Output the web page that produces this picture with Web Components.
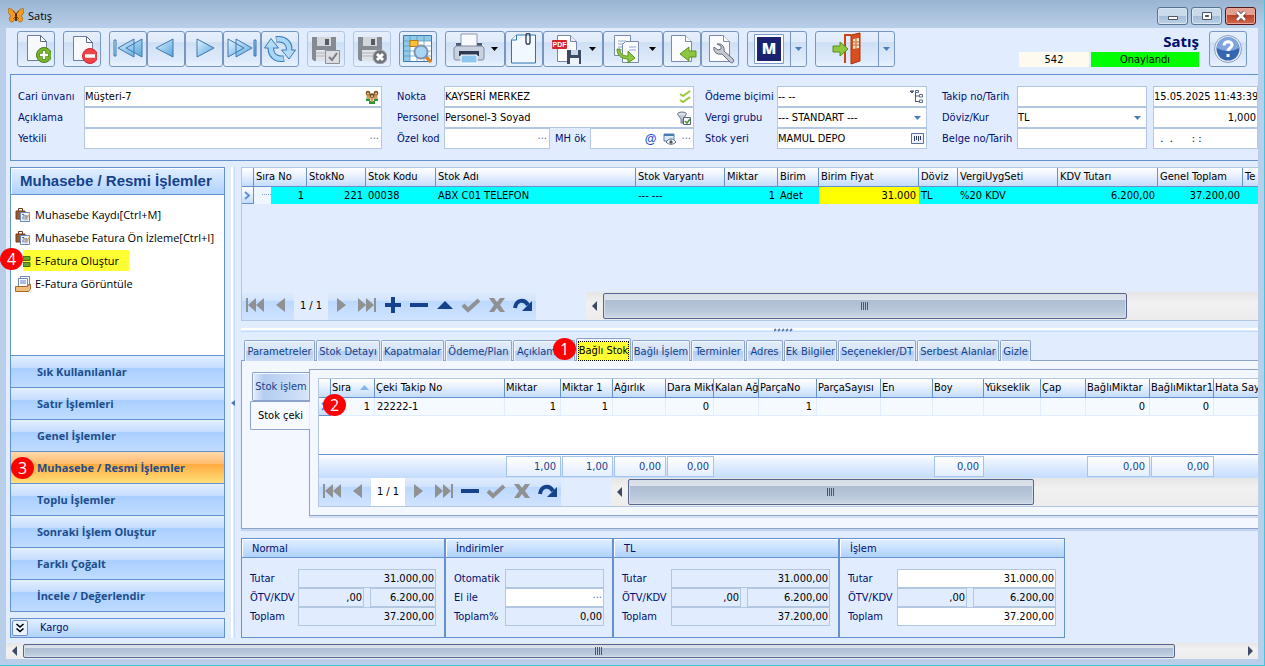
<!DOCTYPE html>
<html lang="tr">
<head>
<meta charset="utf-8">
<title>Satış</title>
<style>
html,body{margin:0;height:100%}
body{font:11px/14px "DejaVu Sans Condensed","Liberation Sans",sans-serif;color:#000;overflow:hidden}
.work{display:flex;flex:1;min-height:0;padding:6px 0 5px 4px}
.main{flex:1;min-width:0;display:flex;flex-direction:column;margin-left:6px}
</style>
</head>
<body>
<app-window caption="Satış">
  <sales-toolbar></sales-toolbar>
  <sales-header></sales-header>
  <div class="work">
    <side-nav></side-nav>
    <pane-splitter></pane-splitter>
    <div class="main">
      <data-grid source="lines"></data-grid>
      <pane-splitter flat></pane-splitter>
      <detail-tabs><data-grid source="packing"></data-grid></detail-tabs>
      <totals-panel></totals-panel>
    </div>
  </div>
  <scroll-bar end style="--thumb:1152;--rest:66;--h:16px"></scroll-bar>
</app-window>

<script>
const ICONS = {
butterfly:[16,16,`<path d="M8 6C6 1 1 0 0 1c0 3 1 6 3 7-2 1-2 3-1 5 2 2 4 1 6-4zM8 6c2-5 7-6 8-5 0 3-1 6-3 7 2 1 2 3 1 5-2 2-4 1-6-4z" fill="#f19a1f" stroke="#a8610f" stroke-width=".7"/><path d="M8 5v8" stroke="#2b1605" stroke-width="1.6"/><path d="M8 6L5 3M8 6l3-3M8 8l-3 3M8 8l3 3" stroke="#7a400a" stroke-width=".8"/>`],
add:[30,30,`<path d="M6.500 1.500h13l6 6v19h-19z" fill="#f7f9fd" stroke="#6f7fa3"/><path d="M19.500 1.500v6h6z" fill="#fff" stroke="#5b6b90"/><circle cx="23" cy="21" r="7.500" fill="#76b82a" stroke="#4a7f14"/><path d="M23 16.500v9M18.500 21h9" stroke="#4a7f14" stroke-width="4"/><path d="M23 17v8M19 21h8" stroke="#fff" stroke-width="2.500"/>`],
remove:[30,30,`<path d="M6.500 2.500h13l6 6v18h-19z" fill="#f7f9fd" stroke="#6f7fa3"/><path d="M19.500 2.500v6h6z" fill="#fff" stroke="#5b6b90"/><circle cx="23" cy="22" r="7.500" fill="#f0444b" stroke="#c8242b"/><path d="M18 22h10" stroke="#fff" stroke-width="3.500"/>`],
first:[32,24,`<g fill="url(#b)" stroke="#3f78b0"><path d="M2 3h2v16H2zM22 2v18L6 11zM30 2v18L14 11z"/></g>`],
prev:[32,24,`<path d="M23 2v18L6 11z" fill="url(#b)" stroke="#3f78b0"/>`],
next:[32,24,`<path d="M9 2v18l17-9z" fill="url(#b)" stroke="#3f78b0"/>`],
last:[32,24,`<g fill="url(#b)" stroke="#3f78b0"><path d="M28 3h2v16h-2zM2 2v18l16-9zM10 2v18l16-9z"/></g>`],
refresh:[32,28,`<path d="M12 4.500C20 3 26 8 25 15M20 23.500C12 25 6 20 7 12" stroke="#3a79b5" stroke-width="6.500"/><path d="M17.500 15h14L25 24zM.5 13h14L7 3.500z" fill="#b5dcf6" stroke="#3a79b5"/><path d="M12.500 4.500C20 3 26 8 25 16M19.500 23.500C12 25 6 20 7 11" stroke="#a9d6f4" stroke-width="4.500"/>`],
saveok:[30,30,`<path d="M1 3h24v24H3l-2-2z" fill="#858b93"/><path d="M6 3h14v9H6z" fill="#d3d7dc"/><path d="M14 5h4v6h-4z" fill="#565b63"/><path d="M5 16h16v11H5z" fill="#dfe2e6"/><path d="M5 19h16M5 22h16" stroke="#b1b6bd"/><path d="M14.500 16.500h14v13h-14z" fill="#dcdee1" stroke="#8b9199"/><path d="M18 23l3 3 5-7" fill="none" stroke="#777d86" stroke-width="2"/>`],
saveno:[30,30,`<path d="M1 3h24v24H3l-2-2z" fill="#858b93"/><path d="M6 3h14v9H6z" fill="#d3d7dc"/><path d="M14 5h4v6h-4z" fill="#565b63"/><path d="M5 16h16v11H5z" fill="#dfe2e6"/><path d="M5 19h16M5 22h16" stroke="#b1b6bd"/><circle cx="23" cy="23" r="7" fill="#6f747b" stroke="#9da2a8"/><path d="M20 20l6 6M26 20l-6 6" stroke="#fff" stroke-width="3"/>`],
gridfind:[32,30,`<path d="M1.500 1.500h28v26h-28z" fill="#fff" stroke="#3d78ad"/><path d="M2 2h27v5H2zM2 7h6v20H2z" fill="#8fcbe8"/><path d="M8 1v26M15 1v26M22 1v26M2 7h27M2 12h27M2 17h27M2 22h27" stroke="#4b93bf" opacity=".7"/><path d="M8 6.500h8v6H8z" fill="#fbbf38" stroke="#c07a10"/><path d="M23 22l6 6" stroke="#d9822c" stroke-width="3.500"/><circle cx="19" cy="18" r="6.500" fill="#a9d6f5" stroke="#8193b5" stroke-width="2"/>`],
printer:[32,32,`<path d="M8 1h16v13H8z" fill="#f7f9fd" stroke="#8a96ad"/><path d="M3 10h5v4h16v-4h5v6H3z" fill="#4e5b73"/><path d="M1 15l2-2h26l2 2v10c0 2-1 2-3 2H4c-2 0-3 0-3-2z" fill="#c9d0df" stroke="#7f8ba3"/><path d="M6 18h20v5H6z" fill="#2f3a50"/><path d="M8 22h16v8H8z" fill="#8cc7ee" stroke="#fff"/>`],
clip:[28,32,`<path d="M1.500 7l5-5H25.500v28h-24z" fill="#f2f8ff" stroke="#2e74b5"/><path d="M1.500 7h5V2" fill="#fff" stroke="#2e74b5"/><path d="M16 3v6c0 3 4 3 4 0V3c0-4-4-4-4 0" fill="none" stroke="#3b4554" stroke-width="1.400"/>`],
pdf:[32,32,`<path d="M6.500 2.500h13l6 6v20h-19z" fill="#fff" stroke="#7888aa"/><path d="M19.500 2.500v6h6" fill="#eef" stroke="#7888aa"/><rect x="1" y="7" width="15" height="9" rx="1" fill="#d6232c"/><text x="8.500" y="14" font-size="7" text-anchor="middle" font-family="Liberation Sans,sans-serif" font-weight="700" fill="#fff">PDF</text><path d="M16 17h14v14H16z" fill="#3d4a63"/><path d="M20 17h7v5h-7z" fill="#c9d6ea"/><path d="M19 25h9v6h-9z" fill="#eef3fb"/>`],
copy:[32,32,`<path d="M3.500 2.500h16v20h-16z" fill="#f9fbff" stroke="#7a8bb0"/><path d="M7 8h8M7 11h8M7 14h8M7 17h5" stroke="#8ba6d3"/><path d="M11.500 11.500l3-3h13v21h-16z" fill="#f9fbff" stroke="#7a8bb0"/><path d="M18 14h7M18 17h7" stroke="#8ba6d3"/><path d="M9 16c0 6 4 7 8 7v-5l7 7-7 5v-4C10 26 6 22 6 16z" fill="#8dc63f" stroke="#5b9420"/>`],
import:[32,32,`<path d="M5.500 2.500h14l6 6v20h-20z" fill="#fafcff" stroke="#7a8bb0"/><path d="M19.500 2.500v6h6" fill="#fff" stroke="#7a8bb0"/><path d="M14 21l9-7v4h7v6h-7v4z" fill="#8dc63f" stroke="#5b9420"/>`],
wrench:[32,32,`<path d="M5.500 2.500h14l6 6v20h-20z" fill="#fafcff" stroke="#7a8bb0"/><path d="M19.500 2.500v6h6" fill="#fff" stroke="#7a8bb0"/><path d="M13 11c5-1 8 3 7 7l9 8c2 3-1 5-3 3l-8-8c-5 1-9-2-8-7l4 3 3-1 0-3z" fill="#c4c9d1" stroke="#646c7a"/>`],
mlogo:[30,30,`<path d="M.5.500h29v29H.500z" fill="#fff" stroke="#7b9bd0"/><path d="M3 3h24v24H3z" fill="#1b2370"/><text x="15" y="20" font-size="15" text-anchor="middle" font-family="Open Sans,sans-serif" font-weight="800" fill="#fff">M</text>`],
exit:[32,34,`<path d="M14 31V3h6" fill="none" stroke="#c9441b" stroke-width="2"/><path d="M20 3l9-2v28l-9 3z" fill="#d94e1f" stroke="#a93210"/><path d="M22 7l6-1v10l-6 1z" fill="#f2e7c4"/><path d="M25 6v11M22 10h6M22 13h6" stroke="#c9692f"/><path d="M2 14h7v-4l8 7-8 7v-4H2z" fill="#8fc740" stroke="#568d1c"/>`],
help:[32,32,`<circle cx="16" cy="16" r="13.500" fill="#e8edf6" stroke="#8c9fc2"/><circle cx="16" cy="16" r="11.500" fill="#3566b0"/><path d="M5 15a11 11 0 0 1 22 0c-7 4-15 4-22 0z" fill="#7fa5dc"/><path d="M12 12.500c0-5 8-5 8-.5 0 3-4 3-4 6" fill="none" stroke="#fff" stroke-width="3"/><path d="M14.500 21h3v3h-3z" fill="#fff"/>`],
people:[14,14,`<path d="M1 8.500h4v2.500H1zM9 8.500h4v2.500H9zM4 11h6v3H4z" fill="#2c9638"/><path d="M1 4h4v5H2zM9 4h4l-1 5H9zM5 7h4l-1 5H6z" fill="#d09a63"/><circle cx="3" cy="3" r="2.300" fill="#7d5423"/><circle cx="11" cy="3" r="2.300" fill="#7d5423"/><circle cx="7" cy="5.500" r="2.300" fill="#6d4519"/><circle cx="3" cy="3.600" r="1.100" fill="#e8bd8c"/><circle cx="11" cy="3.600" r="1.100" fill="#e8bd8c"/><circle cx="7" cy="6.200" r="1.100" fill="#e8bd8c"/>`],
checks:[12,14,`<path d="M1 4l3 2 7-5M1 10l3 2 7-5" fill="none" stroke="#97c83c" stroke-width="2"/>`],
filter:[14,14,`<ellipse cx="5" cy="3" rx="4.500" ry="2" fill="#dde2ea" stroke="#6a7486"/><path d="M1 4l3 4v4h2V8l3-4" fill="#c6ccd6" stroke="#6a7486"/><path d="M6.500 6.500h7v7h-7z" fill="#fff" stroke="#55627c"/><path d="M8 10l2 2 3-4" fill="none" stroke="#48962b" stroke-width="1.600"/>`],
eyewin:[13,12,`<path d="M1 1h10v7H1z" fill="#dcebfa" stroke="#5784b8"/><path d="M1 2h10" stroke="#4a7ab3" stroke-width="2"/><path d="M3 9c3-4 7-4 10 0-3 3-7 3-10 0z" fill="#fff" stroke="#5a6477"/><circle cx="8" cy="9" r="1.700" fill="#4c5669"/>`],
tree:[14,14,`<path d="M0 1h4L2 3zM5.500 1v11M6 6h3M6 11.500h3" stroke="#4b5a78" fill="#4b5a78"/><path d="M5.500.500h3v2h-3zM9.500 4.500h3v2.500h-3zM9.500 10h3v2.500h-3z" fill="#fff" stroke="#5b6a88"/>`],
barcode:[13,11,`<path d="M.5.500h12v10H.500z" fill="#eef2fb" stroke="#5a70a0"/><path d="M3.500 3v5M5.500 3v4M7.500 3v5M9.500 3v4" stroke="#2d3c5e"/>`],
drop:[7,4,`<path d="M0 0h7L3.500 4z" fill="currentColor"/>`],
bag:[16,16,`<path d="M1 4h9v8H1z" fill="#9a5a30" stroke="#6b3a1c"/><path d="M3.500 4V1.500h4V4" fill="none" stroke="#6b3a1c"/><path d="M5.500 5.500h9v9h-9z" fill="#f5f8ff" stroke="#6b84b3"/><path d="M7 7.500h2v2M8 9.500v3M11 8v4" stroke="#3f62a8"/><path d="M10 12l5-5" stroke="#d9a04e" stroke-width="1.500"/><circle cx="11" cy="11" r="2" fill="none" stroke="#8fa3c9" stroke-width=".8"/>`],
stack:[8,12,`<path d="M0 1.500h7v4H0zM0 7.500h7v4H0z" fill="#6aa32a" stroke="#3f7a12"/>`],
tray:[16,16,`<path d="M5.500.500h9v8h-9z" fill="#fff" stroke="#6f86b8"/><path d="M3.500 2.500h9v8h-9z" fill="#fff" stroke="#6f86b8"/><path d="M5 5h6M5 7h6" stroke="#5f7ab4"/><path d="M.5 10.500h12l3-2.500v5l-2 2.500H.500z" fill="#f0bd7c" stroke="#a9692c"/>`],
chev2:[10,10,`<path d="M1.500 1l3.500 3L8.500 1M1.500 5.500l3.500 3 3.500-3" fill="none" stroke="#000" stroke-width="1.600"/>`],
rfirst:[20,16,`<path d="M1 1h2v14H1zM11 1v14L3 8zM19 1v14l-8-7z" fill="#8f9193"/>`],
rprev:[20,16,`<path d="M14 1v14L5 8z" fill="#8f9193"/>`],
rnext:[20,16,`<path d="M6 1v14l9-7z" fill="#8f9193"/>`],
rlast:[20,16,`<path d="M17 1h2v14h-2zM1 1v14l8-7zM9 1v14l8-7z" fill="#8f9193"/>`],
rplus:[20,16,`<path d="M8 0h4v6h6v4h-6v6H8v-6H2V6h6z" fill="#15428b"/>`],
rminus:[20,16,`<path d="M1 6h18v4H1z" fill="#15428b"/>`],
rup:[20,16,`<path d="M2 12L10 4l8 8z" fill="#15428b"/>`],
rcheck:[20,16,`<path d="M2 8l5 5L18 3" fill="none" stroke="#8f9193" stroke-width="4"/>`],
rcross:[20,16,`<path d="M2 1h5l3 4 3-4h5l-5 7 5 7h-5l-3-4-3 4H2l5-7z" fill="#8f9193"/>`],
rredo:[20,16,`<path d="M2 11C3 3 11 1 15 8" fill="none" stroke="#15428b" stroke-width="4"/><path d="M19 4v10H9z" fill="#15428b"/>`],
};
let uid = 0;
class Base extends HTMLElement {
  connectedCallback() {
    if (this.shadowRoot) return;
    this.attachShadow({mode: 'open'}).innerHTML = `<style>:host,*{box-sizing:border-box}${this.css()}</style>${this.html()}`;
  }
  at(n, d = '') { return this.getAttribute(n) ?? d; }
}
const def = (n, c) => customElements.define(n, c);
const icon = n => `<ui-icon name="${n}"></ui-icon>`;

def('ui-icon', class extends Base {
  css() { return `:host{display:inline-flex;flex:none}svg{display:block}`; }
  html() {
    const [w, h, body] = ICONS[this.at('name')];
    return `<svg width="${w}" height="${h}" viewBox="0 0 ${w} ${h}" fill="none" aria-hidden="true"><defs><linearGradient id="b" x1="0" y1="0" x2="1" y2="1"><stop offset="0" stop-color="#e4f4fd"/><stop offset=".6" stop-color="#8cc4ec"/><stop offset="1" stop-color="#5aa2da"/></linearGradient></defs>${body}</svg>`;
  }
});

def('step-badge', class extends Base {
  css() { return `:host{position:absolute;z-index:3;display:flex;align-items:center;justify-content:center;width:23px;height:22px;border-radius:50%;background:#fe0000;color:#fff;font:16px/22px "Open Sans",sans-serif}`; }
  html() { return `<slot></slot>`; }
});

def('app-window', class extends Base {
  css() { return `
    :host{display:flex;flex-direction:column;min-height:100vh;background:#b9cfe9;border-right:1px solid #42c4de;border-bottom:1px solid #42c4de;padding:0 6px 6px}
    header{display:flex;align-items:center;height:28px;margin:0 -6px;padding:4px 8px 0 8px;background:linear-gradient(#99b4d1,#b9cfe9);font:11px/16px "Open Sans",sans-serif}
    h1{flex:1;margin:0 0 0 4px;font:inherit}
    .wb{display:flex;gap:3px}
    button{width:31px;height:18px;padding:0;border:1px solid #5b7391;border-radius:3px;background:linear-gradient(#c9daec 50%,#a3bcd7 50%,#bcd2e8);display:flex;align-items:center;justify-content:center;box-shadow:inset 0 0 0 1px #d8e5f2}
    .close{border-color:#551a17;background:linear-gradient(#e39f91 45%,#bd3f29 45%,#d2684c);box-shadow:inset 0 0 0 1px #e9a798}
    main{flex:1;display:flex;flex-direction:column;min-width:0;background:#e1edff}`; }
  html() { return `
    <header>${icon('butterfly')}<h1>${this.at('caption')}</h1><div class="wb">
      <button aria-label="Simge durumuna küçült"><svg width="14" height="10"><path d="M2.500 5.500h9v3h-9z" fill="#fff" stroke="#4c5561"/></svg></button>
      <button aria-label="Ekranı kapla"><svg width="14" height="10"><path d="M2.500 1.500h9v7h-9z" fill="#fff" stroke="#4c5561"/><path d="M5.500 4.500h3v1h-3z" stroke="#4c5561"/></svg></button>
      <button class="close" aria-label="Kapat"><svg width="14" height="10"><path d="M3 1l8 8M11 1L3 9" stroke="#4c3a3a" stroke-width="4"/><path d="M3 1l8 8M11 1L3 9" stroke="#fff" stroke-width="2.500"/></svg></button>
    </div></header><main><slot></slot></main>`; }
});

def('sales-toolbar', class extends Base {
  css() { return `
    :host{display:flex;height:46px;padding:3px 11px 0;align-items:flex-start}
    button{height:36px;width:38px;padding:0;border:1px solid #7896c4;border-radius:3px;background:linear-gradient(#e6effb,#dfeafa 30%,#cfdff4 31%,#dfebfb 85%,#e9f3ff);display:flex;align-items:center;justify-content:center;color:#000}
    button[disabled]{border-color:#b3c6e2}
    .g{display:flex;margin-right:8px}
    .wide{width:60px;gap:6px}
    .m{width:44px;border-radius:3px 0 0 3px}.e{width:64px;border-radius:3px 0 0 3px}
    .dd{width:17px;margin-left:-1px;border-radius:0 3px 3px 0;color:#4a7ebb}
    .status{margin-left:auto;display:grid;grid-template-columns:70px 108px;column-gap:2px;text-align:center;margin-right:10px}
    h2{grid-column:1/3;margin:0;text-align:right;font:700 15px/21px "Noto Sans","Open Sans",sans-serif;color:#000f6e}
    output{height:15px;line-height:16px;background:#fffaf0}
    .ok{background:#0f0}`; }
  html() {
    const b = (n, l, c = '', x = '') => `<button class="${c}" aria-label="${l}" ${x}>${icon(n)}${c === 'wide' ? icon('drop') : ''}</button>`;
    const dd = l => `<button class="dd" aria-label="${l}">${icon('drop')}</button>`;
    return `<div class="g">${b('add','Yeni')}</div><div class="g">${b('remove','Sil')}</div>
    <div class="g">${b('first','İlk')}${b('prev','Önceki')}${b('next','Sonraki')}${b('last','Son')}${b('refresh','Yenile')}</div>
    <div class="g">${b('saveok','Kaydet','','disabled')}</div><div class="g">${b('saveno','Vazgeç','','disabled')}</div>
    <div class="g">${b('gridfind','Listele')}</div>
    <div class="g">${b('printer','Yazdır','wide')}${b('clip','Ekler')}${b('pdf','PDF kaydet','wide')}${b('copy','Kopyala','wide')}${b('import','İçe al')}${b('wrench','Ayarlar')}</div>
    <div class="g">${b('mlogo','Mikro','m')}${dd('Seçenekler')}</div>
    <div class="g">${b('exit','Çıkış','e')}${dd('Çıkış seçenekleri')}</div>
    <div class="status"><h2>Satış</h2><output>542</output><output class="ok">Onaylandı</output></div>
    ${b('help','Yardım')}`;
  }
});

def('form-field', class extends Base {
  css() { return `
    :host{display:flex;min-width:0;height:var(--row,21px);align-items:stretch;color:#000f6e}
    label{flex:none;width:var(--label,0px);line-height:var(--row,21px);white-space:nowrap}
    .box{flex:1;min-width:0;display:flex;align-items:center;gap:6px;border:1px solid #b3c7e2;background:#fff;padding-right:var(--pad,2px)}
    :host([readonly]) .box{background:#e1edff}
    input,select{flex:1;width:0;min-width:0;height:100%;border:0;padding:0;margin:0;background:none;font:inherit;color:#000;appearance:none;outline:0;border-radius:0}
    :host([num]) input{text-align:right}
    :host([num]) .box{padding-right:1px}
    i{font-style:normal;color:#4a6ea8;line-height:8px;margin-top:-6px}
    b{color:#1e50d8;font:700 12px/14px "Liberation Sans",sans-serif}
    ui-icon{color:#4a7ebb}
    ui-icon[name=drop]{margin-right:3px}`; }
  html() {
    const id = 'f' + uid++, l = this.at('label'), v = this.at('value');
    const name = l ? `id="${id}"` : `id="${id}" aria-label="${this.at('name')}"`;
    const ad = this.at('icons').split(' ').filter(Boolean).map(n => n === 'dots' ? '<i>...</i>' : n === 'at' ? '<b>@</b>' : icon(n)).join('');
    const ctl = this.hasAttribute('select') ? `<select ${name}><option>${v}</option></select>` : `<input ${name} value="${v}" ${this.hasAttribute('readonly') ? 'readonly' : ''}>`;
    return `${l ? `<label for="${id}">${l}</label>` : ''}<div class="box">${ctl}${ad}</div>`;
  }
});

def('sales-header', class extends Base {
  css() { return `
    :host{display:grid;grid-template-columns:364fr 297fr 218fr 205fr 96fr;column-gap:15px;margin-left:4px;height:87px;padding:11px 0 0 7px;border:solid #6592cf;border-width:1px 0 1px 1px}
    div{display:flex;flex-direction:column;min-width:0}
    .a{--label:66px}.b{--label:47px}.c{--label:72px;margin-left:-4px}.d{--label:75px}.e{margin-left:-9px;--pad:0px}
    .two{flex-direction:row;gap:5px}.two form-field:first-child{flex:153}.two form-field:last-child{flex:139;--label:35px}`; }
  html() { return `
    <div class="a"><form-field label="Cari ünvanı" value="Müşteri-7" icons="people"></form-field><form-field label="Açıklama"></form-field><form-field label="Yetkili" icons="dots"></form-field></div>
    <div class="b"><form-field label="Nokta" value="KAYSERİ MERKEZ" icons="checks"></form-field><form-field label="Personel" value="Personel-3 Soyad" icons="filter"></form-field>
      <div class="two"><form-field label="Özel kod" icons="dots"></form-field><form-field label="MH ök" icons="at eyewin dots"></form-field></div></div>
    <div class="c"><form-field label="Ödeme biçimi" value="-- --" icons="tree"></form-field><form-field label="Vergi grubu" value="--- STANDART ---" select icons="drop"></form-field><form-field label="Stok yeri" value="MAMUL DEPO" icons="barcode"></form-field></div>
    <div class="d"><form-field label="Takip no/Tarih"></form-field><form-field label="Döviz/Kur" value="TL" select icons="drop"></form-field><form-field label="Belge no/Tarih"></form-field></div>
    <div class="e"><form-field name="Takip tarihi" value="15.05.2025 11:43:39"></form-field><form-field name="Kur" num value="1,000"></form-field><form-field name="Belge tarihi" value="  .  .      : :"></form-field></div>`; }
});

def('side-nav', class extends Base {
  css() { return `
    :host{display:flex;flex-direction:column;width:215px;flex:none}
    .box{flex:1;display:flex;flex-direction:column;border:1px solid #6592cf;background:#fff}
    h2{margin:0;height:27px;padding-left:9px;border-bottom:1px solid #6592cf;background:linear-gradient(#e3efff,#afd2ff);box-shadow:inset 1px 1px #fff;font:700 15px/26px "Liberation Sans",sans-serif;color:#15428b;white-space:nowrap}
    ul{list-style:none;margin:0;padding:8px 0 0 4px;flex:1}
    li{position:relative;height:23px;display:flex;align-items:center}
    a{display:flex;align-items:center;gap:4px;color:#000;text-decoration:none;font:11px/16px "Open Sans",sans-serif;white-space:nowrap}
    li.hot a{background:#ffff33;height:21px;margin-left:8px;padding-right:10px}
    li step-badge{left:-15px;top:-1px}
    .acc{position:relative;display:block;width:100%;height:32px;border:0;border-top:1px solid #6592cf;padding:0 0 0 26px;text-align:left;background:linear-gradient(#e3efff,#c5deff 38%,#a9cfff 40%,#c0dcff);font:700 11px/30px "Open Sans",sans-serif;color:#204d89}
    .on{background:linear-gradient(#ffd9aa,#ffbb6e 38%,#ffab3f 40%,#fee07b)}
    .acc step-badge{left:0;top:5px}
    .cargo{display:flex;align-items:center;gap:12px;height:20px;margin-top:6px;padding:0 1px;border:1px solid #6592cf;background:linear-gradient(#e3efff,#afd2ff);color:#000f6e}
    .cargo button{width:16px;height:16px;padding:0;border:1px solid #7590b8;border-radius:2px;background:#e9f2ff;display:flex;align-items:center;justify-content:center}`; }
  html() {
    const it = (i, t) => `<li><a href="#">${icon(i)}${t}</a></li>`;
    return `<div class="box"><h2>Muhasebe / Resmi İşlemler</h2><ul>${it('bag','Muhasebe Kaydı[Ctrl+M]')}${it('bag','Muhasebe Fatura Ön İzleme[Ctrl+I]')}
    <li class="hot"><step-badge>4</step-badge><a href="#">${icon('stack')}E-Fatura Oluştur</a></li>${it('tray','E-Fatura Görüntüle')}</ul>
    ${['Sık Kullanılanlar','Satır İşlemleri','Genel İşlemler','Muhasebe / Resmi İşlemler','Toplu İşlemler','Sonraki İşlem Oluştur','Farklı Çoğalt','İncele / Değerlendir'].map((t, i) => `<button class="acc ${i === 3 ? 'on' : ''}">${i === 3 ? '<step-badge>3</step-badge>' : ''}${t}</button>`).join('')}</div>
    <div class="cargo"><button aria-label="Genişlet">${icon('chev2')}</button>Kargo</div>`;
  }
});

def('pane-splitter', class extends Base {
  css() { return `
    :host{display:flex;flex:none;align-items:center;justify-content:center;width:4px;margin-left:6px;background:linear-gradient(90deg,#fff 2px,#e1edff 2px,#e1edff 3px,#c3dcff 3px)}
    :host([flat]){width:auto;height:4px;margin:7px 0 6px;padding-left:68px;background:linear-gradient(#fff 2px,#e1edff 2px,#e1edff 3px,#c3dcff 3px)}
    svg{flex:none}`; }
  html() { return this.hasAttribute('flat')
    ? `<svg width="19" height="4"><path d="M0 3l2-2M4 3l2-2M8 3l2-2M12 3l2-2M16 3l2-2" stroke="#5d7fb5" stroke-width="2"/></svg>`
    : `<svg width="4" height="6"><path d="M4 0v6L0 3z" fill="#4a78b8"/></svg>`; }
});

def('scroll-bar', class extends Base {
  css() { return `
    :host{display:flex;flex:1;min-width:0;height:var(--h,28px);background:linear-gradient(#e6e6e6,#f1f1f1 40%,#ececec)}
    :host([end]){flex:none}
    button{flex:none;width:17px;border:0;padding:0;background:none;display:flex;align-items:center;justify-content:center}
    .thumb{flex:var(--thumb);display:flex;align-items:center;justify-content:center;margin:1px 0;border:1px solid #56668f;border-radius:2px;background:linear-gradient(#d6dee6,#dde3eb 25%,#aebdd2 27%,#bccadd 75%,#cdd8e6);box-shadow:inset 0 0 0 1px #d5dfea}
    .rest{flex:var(--rest)}`; }
  html() { return `<button aria-label="Sola kaydır"><svg width="6" height="10"><path d="M5 0v10L0 5z" fill="#3c4a66"/></svg></button><div class="thumb"><svg width="8" height="8"><path d="M.5 0v8M2.500 0v8M4.500 0v8M6.500 0v8" stroke="#4a5878"/></svg></div><div class="rest"></div>${this.hasAttribute('end') ? '<button aria-label="Sağa kaydır"><svg width="6" height="10"><path d="M1 0v10l5-5z" fill="#3c4a66"/></svg></button>' : ''}`; }
});

def('record-nav', class extends Base {
  css() { return `
    :host{display:flex;flex:none;height:28px}
    button{width:26px;height:28px;padding:0 1px 2px 0;border:0;background:linear-gradient(#dfebfe,#d2e4fe 30%,#bcd8ff 32%,#cfe3ff);display:flex;align-items:center;justify-content:center}
    output{width:34px;line-height:28px;text-align:center;background:var(--page,#e1edff)}`; }
  html() {
    const b = n => `<button aria-label="${n}">${icon(n)}</button>`;
    return b('rfirst') + b('rprev') + '<output>1 / 1</output>' + this.at('actions').split(' ').map(b).join('');
  }
});

const GRIDS = {
  lines: {
    cols: [['Sıra No',53,'1','r'],['StokNo',59,'221','r'],['Stok Kodu',70,'00038'],['Stok Adı',200,'ABX C01 TELEFON'],['Stok Varyantı',89,'--- ---'],['Miktar',53,'1','r'],['Birim',41,'Adet'],['Birim Fiyat',100,'31.000','r y'],['Döviz',39,'TL'],['VergiUygSeti',100,'%20 KDV'],['KDV Tutarı',100,'6.200,00','r'],['Genel Toplam',85,'37.200,00','r'],['Te',60,'']],
    actions: 'rnext rlast rplus rminus rup rcheck rcross rredo', thumb: 524, rest: 131 },
  packing: {
    cols: [['Sıra',44,'1','r'],['Çeki Takip No',130,'22222-1'],['Miktar',56,'1','r','1,00'],['Miktar 1',52,'1','r','1,00'],['Ağırlık',53,'','','0,00'],['Dara Mikt',48,'0','r','0,00'],['Kalan Ağ',45,''],['ParçaNo',58,'1','r'],['ParçaSayısı',64,''],['En',52,''],['Boy',51,'','','0,00'],['Yükseklik',57,''],['Çap',45,''],['BağlıMiktar',64,'0','r','0,00'],['BağlıMiktar1',64,'0','r','0,00'],['Hata Say',70,'']],
    actions: 'rnext rlast rminus rcheck rcross rredo', thumb: 405, rest: 225 }
};
def('data-grid', class extends Base {
  css() { return `
    :host{display:flex;flex-direction:column;position:relative;min-width:0;border:1px solid #b3c7e2;border-right:0;flex:1}
    :host([source=lines]){flex:none;height:154px}
    :host([source=packing]){background:#fff;--page:#fff}
    .view{flex:1;overflow:hidden;min-height:0}
    table{table-layout:fixed;border-collapse:separate;border-spacing:0}
    th,td{padding:0 3px 0 2px;overflow:hidden;white-space:nowrap;font-weight:400;text-align:left}
    th{height:19px;line-height:18px;padding:0 0 0 2px;border-right:1px solid #6592cf;border-bottom:1px solid #6592cf;background:linear-gradient(#fff,#f0f6ff 30%,#c4dcff)}
    :host([source=packing]) thead th{padding-left:1px}
    td{height:17px;line-height:17px}
    tbody th{padding:0;height:17px}
    .r{text-align:right}
    :host([source=lines]) td{background:#0ff}
    :host([source=lines]) td.y{background:#ff0}
    :host([source=lines]) .c1{background:repeating-linear-gradient(90deg,#7e9cc8 0 1px,#0000 1px 2px) 8px 7px/9px 1px no-repeat,linear-gradient(90deg,#eef5ff 17px,#0ff 17px)}
    :host([source=packing]) td{background:#f5faff;border-right:1px solid #e1edff;border-bottom:1px solid #e1edff;padding-right:4px}
    .sort{float:right;margin:6px 5px 0 0;color:#84b4ee}
    .foot{overflow:hidden;flex:none}
    .foot td{height:24px;padding:1px 0 1px 1px!important;border:0!important;background:linear-gradient(#fff,#e8f1ff 30%,#c4dcff)!important}
    .foot tr:first-child td{border-top:1px solid #6592cf!important}
    output{display:block;height:21px;line-height:20px;text-align:right;padding-right:4px;border:1px solid #a6c3ec;background:linear-gradient(#fff,#e3eeff);color:#15428b}
    .bar{display:flex;flex:none;height:28px;background:#e1edff}
    .bar scroll-bar{margin-left:50px}
    step-badge{left:4px;top:15px}`; }
  html() {
    const s = this.at('source'), g = GRIDS[s], w = g.cols.reduce((a, c) => a + c[1], 12);
    const cg = `<colgroup><col style="width:12px">${g.cols.map(c => `<col style="width:${c[1]}px">`).join('')}</colgroup>`;
    const pack = s === 'packing';
    return `<div class="view"><table style="width:${w}px">${cg}<thead><tr><th></th>${g.cols.map((c, i) => `<th scope="col">${c[0]}${pack && !i ? '<svg class="sort" width="9" height="5"><path d="M0 5h9L4.500 0z" fill="currentColor"/></svg>' : ''}</th>`).join('')}</tr></thead>
    <tbody><tr><th scope="row"><svg width="11" height="13" style="display:block" aria-label="Seçili satır"><path d="M3 3l4 3.500L3 10" fill="none" stroke="#5b92dd" stroke-width="2"/></svg></th>${g.cols.map((c, i) => `<td class="${c[3] || ''} c${i + 1}">${c[2]}</td>`).join('')}</tr></tbody></table></div>
    ${pack ? `<step-badge>2</step-badge><div class="foot"><table style="width:${w}px">${cg}<tr><td></td>${g.cols.map(c => `<td>${c[4] ? `<output>${c[4]}</output>` : ''}</td>`).join('')}</tr></table></div>` : ''}
    <div class="bar"><record-nav actions="${g.actions}"></record-nav><scroll-bar style="--thumb:${g.thumb};--rest:${g.rest}"></scroll-bar></div>`;
  }
});

def('detail-tabs', class extends Base {
  css() { return `
    :host{display:flex;flex-direction:column;flex:1;min-height:0}
    .tabs{display:flex;gap:1px;padding-left:3px;align-items:flex-end;height:23px}
    button{position:relative;flex:none;height:21px;padding:0;border:1px solid #8ea3cb;border-bottom:0;border-radius:2px 2px 0 0;background:linear-gradient(#e3edfb,#d5e4f8 50%,#b4cdf0 52%,#c9dcf6);box-shadow:inset 1px 1px #f3f8ff,inset -1px 0 #e3edfb;font:inherit;line-height:22px;color:#15428b;text-align:center;white-space:nowrap}
    .on{height:23px;background:#f3f7ff;color:#000;padding:2px 1px 0;z-index:1}
    .on span{display:block;height:20px;background:#ffff33;outline:1px dotted #000;outline-offset:-1px;line-height:20px}
    .marked{text-align:left;padding-left:3px}
    button step-badge{right:-2px;top:-3px}
    .page{flex:1;display:flex;min-height:0;border:solid #8ea3cb;border-width:1px 0 1px 1px;background:#f3f7ff;padding:8px 0 12px 8px;margin-top:-1px;box-shadow:0 2px 1px #c5d5ee}
    .side{display:flex;flex-direction:column;width:59px;padding-top:3px;flex:none}
    .side button{height:29px;margin-left:2px;border:1px solid #8ea3cb;border-right:0;border-radius:2px 0 0 2px;background:linear-gradient(90deg,#e3edfb,#b4cdf0 20%,#d5e4f8);line-height:27px}
    .side .act{margin:0 -1px 0 0;background:#f6f9ff;color:#000;z-index:1}
    .inner{flex:1;min-width:0;display:flex;border:solid #8ea3cb;border-width:1px 0 1px 1px;padding:8px 0 8px 8px;box-shadow:0 2px 1px #d3dff3}
    slot{display:flex;flex:1;min-width:0}`; }
  html() {
    const t = [['Parametreler',71],['Stok Detayı',64],['Kapatmalar',63],['Ödeme/Plan',67],['Açıklam',62],['Bağlı Stok',55],['Bağlı İşlem',58],['Terminler',54],['Adres',37],['Ek Bilgiler',53],['Seçenekler/DT',78],['Serbest Alanlar',82],['Gizle',31]];
    return `<div class="tabs" role="tablist">${t.map(([n, w], i) => `<button role="tab" class="${['', '', '', '', 'marked', 'on'][i] || ''}" style="width:${w}px"><span>${n}</span>${i === 4 ? '<step-badge>1</step-badge>' : ''}</button>`).join('')}</div>
    <div class="page"><div class="side"><button>Stok işlem</button><button class="act">Stok çeki</button></div><div class="inner"><slot></slot></div></div>`;
  }
});

def('totals-panel', class extends Base {
  css() { return `
    :host{display:flex;margin-top:9px;height:100px;flex:none;--row:19px}
    fieldset{margin:0;padding:0;border:1px solid #6592cf;min-width:0;display:flex;flex-direction:column}
    h3{margin:0 0 11px;height:19px;padding-left:10px;border-bottom:1px solid #6592cf;background:linear-gradient(#e3efff,#afd2ff);box-shadow:inset 1px 1px #fff;font:inherit;line-height:19px;color:#000f6e}
    .rows{padding:0 8px 0 8px}
    .two{display:flex;gap:6px}.two form-field:first-child{width:var(--first)}.two form-field:last-child{flex:1;--label:0px}
    .n{width:204px;--label:48px;--first:114px}.i{width:168px;--label:51px}.t{width:226px;--label:49px;--first:119px}`; }
  html() {
    const f = (l, v, x = 'readonly') => `<form-field label="${l}" value="${v}" num ${x}></form-field>`;
    const g = (n, c, x) => `<fieldset class="${c}" aria-label="${n}"><h3>${n}</h3><div class="rows">${f('Tutar','31.000,00',x)}<div class="two">${f('ÖTV/KDV',',00')}<form-field name="KDV" value="6.200,00" num readonly></form-field></div>${f('Toplam','37.200,00',x)}</div></fieldset>`;
    return g('Normal','n') + `<fieldset class="i" aria-label="İndirimler"><h3>İndirimler</h3><div class="rows">${f('Otomatik','')}${f('El ile','','icons="dots"')}${f('Toplam%','0,00')}</div></fieldset>` + g('TL','t') + g('İşlem','t',' ');
  }
});
</script>
</body>
</html>
